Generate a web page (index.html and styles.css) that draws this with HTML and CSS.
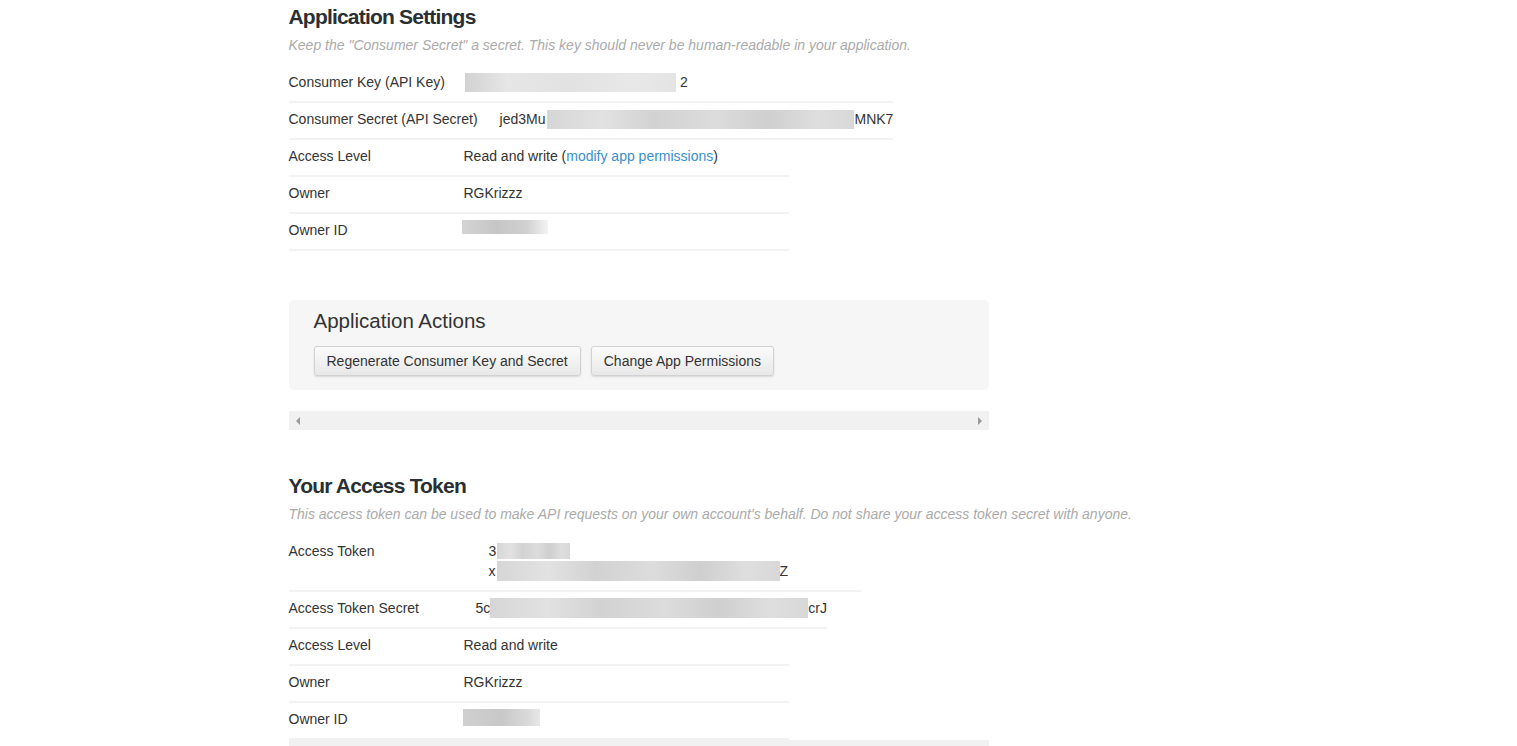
FILE: index.html
```html
<!DOCTYPE html>
<html lang="en">
<head>
<meta charset="utf-8">
<title>Application Settings</title>
<link rel="stylesheet" href="styles.css">
</head>
<body>
<div class="container">
  <h2 class="heading">Application Settings</h2>
  <p class="subtitle">Keep the "Consumer Secret" a secret. This key should never be human-readable in your application.</p>
  <div class="rows">
    <div class="row row-wide"><span class="label">Consumer Key (API Key)</span><span class="value"><span class="blur b-key"></span>2</span></div>
    <div class="row row-wide"><span class="label">Consumer Secret (API Secret)</span><span class="value value-secret">jed3Mu<span class="blur b-secret"></span>MNK7</span></div>
    <div class="row"><span class="label">Access Level</span><span class="value">Read and write (<a class="link" href="#">modify app permissions</a>)</span></div>
    <div class="row"><span class="label">Owner</span><span class="value">RGKrizzz</span></div>
    <div class="row"><span class="label">Owner ID</span><span class="value"><span class="blur b-owner"></span></span></div>
  </div>

  <div class="actions">
    <h3 class="actions-title">Application Actions</h3>
    <div class="buttons">
      <button class="btn">Regenerate Consumer Key and Secret</button>
      <button class="btn">Change App Permissions</button>
    </div>
  </div>

  <div class="hscroll">
    <span class="arrow arrow-left"></span>
    <span class="arrow arrow-right"></span>
  </div>

  <h2 class="heading heading-token">Your Access Token</h2>
  <p class="subtitle">This access token can be used to make API requests on your own account's behalf. Do not share your access token secret with anyone.</p>
  <div class="rows">
    <div class="row row-token"><span class="label">Access Token</span><span class="value value-token"><span class="line">3<span class="blur b-tok1"></span></span><span class="line">x<span class="blur b-tok2"></span>Z</span></span></div>
    <div class="row"><span class="label">Access Token Secret</span><span class="value value-tsecret">5c<span class="blur b-tsecret"></span>crJ</span></div>
    <div class="row"><span class="label">Access Level</span><span class="value">Read and write</span></div>
    <div class="row"><span class="label">Owner</span><span class="value">RGKrizzz</span></div>
    <div class="row"><span class="label">Owner ID</span><span class="value"><span class="blur b-owner2"></span></span></div>
  </div>
  <div class="hscroll hscroll-bottom">
    <span class="arrow arrow-left"></span>
    <span class="arrow arrow-right"></span>
  </div>
</div>
</body>
</html>
```

FILE: styles.css
```css
html, body {
  margin: 0;
  padding: 0;
  background: #fff;
  overflow: hidden;
}

body {
  font-family: "Liberation Sans", Arial, sans-serif;
  font-size: 14px;
  line-height: 20px;
  color: #333;
}

.container {
  width: 940px;
  margin: 0 auto;
}

.heading {
  margin: 4px 0 0;
  font-size: 21px;
  line-height: 26px;
  font-weight: bold;
  letter-spacing: -0.8px;
  color: #292f33;
}

.heading-token {
  margin-top: 43px;
}

.subtitle {
  margin: 5px 0 0;
  font-style: italic;
  color: #aaa;
}

.rows {
  margin-top: 11px;
  display: flex;
  flex-direction: column;
  align-items: flex-start;
}

.row {
  display: flex;
  align-items: flex-start;
  min-width: 500px;
  padding: 6px 0 9px;
  border-bottom: 2px solid #f2f2f2;
  white-space: nowrap;
}

.row-wide {
  min-width: 604px;
}

.row-token {
  min-width: 572px;
}

.label {
  min-width: 155px;
  padding-right: 20px;
}

.value {
  display: inline-flex;
  align-items: center;
}

.value-secret {
  margin-left: 2px;
}

.value-token {
  flex-direction: column;
  align-items: flex-start;
  margin-left: 25px;
}

.value-token .line {
  display: flex;
  align-items: center;
}

.value-tsecret {
  margin-left: 12px;
}

.link {
  color: #3a8fcc;
  text-decoration: none;
}

.blur {
  display: inline-block;
  height: 19px;
  background: linear-gradient(90deg, #d6d6d6 0%, #e2e2e2 18%, #d2d2d2 35%, #dcdcdc 55%, #cfcfcf 72%, #dedede 88%, #d8d8d8 100%);
  filter: blur(0.6px);
}

.b-key {
  width: 211px;
  margin-right: 4px;
  background: linear-gradient(90deg, #d2d2d2 0%, #e6e6e6 20%, #e2e2e2 50%, #e8e8e8 80%, #e4e4e4 100%);
}

.b-secret {
  width: 307px;
  margin-left: 2px;
}

.b-owner {
  width: 86px;
  height: 14px;
  margin-left: -2px;
  background: linear-gradient(90deg, #d4d4d4 0%, #c6c6c6 40%, #d0d0d0 75%, #f4f4f4 100%);
}

.b-tok1 {
  width: 73px;
  height: 16px;
  margin-left: 1px;
}

.b-tok2 {
  width: 283px;
  height: 20px;
  margin-left: 1px;
}

.b-tsecret {
  width: 318px;
  height: 20px;
}

.b-owner2 {
  width: 77px;
  height: 17px;
  margin-left: -1px;
  background: linear-gradient(90deg, #d0d0d0 0%, #c8c8c8 50%, #dadada 85%, #e8e8e8 100%);
}

.actions {
  margin-top: 49px;
  width: 700px;
  box-sizing: border-box;
  padding: 10px 25px 14px;
  background: #f6f6f6;
  border-radius: 5px;
}

.actions-title {
  margin: 0;
  font-size: 20.5px;
  line-height: 22px;
  font-weight: normal;
  color: #333;
}

.buttons {
  display: flex;
  gap: 10px;
  margin-top: 14px;
}

.btn {
  height: 30px;
  padding: 0 12px;
  font-family: "Liberation Sans", Arial, sans-serif;
  font-size: 14px;
  color: #333;
  background: linear-gradient(#fbfbfb, #e8e8e8);
  border: 1px solid #d2d2d2;
  border-radius: 3px;
  box-shadow: 0 1px 2px rgba(0, 0, 0, 0.12);
  cursor: pointer;
}

.hscroll {
  position: relative;
  margin-top: 21px;
  width: 700px;
  height: 19px;
  background: #f1f1f1;
}

.hscroll-bottom {
  margin-top: 0;
}

.arrow {
  position: absolute;
  top: 6px;
  width: 0;
  height: 0;
  border-top: 4px solid transparent;
  border-bottom: 4px solid transparent;
}

.arrow-left {
  left: 7px;
  border-right: 4px solid #999;
}

.arrow-right {
  right: 7px;
  border-left: 4px solid #999;
}
```
